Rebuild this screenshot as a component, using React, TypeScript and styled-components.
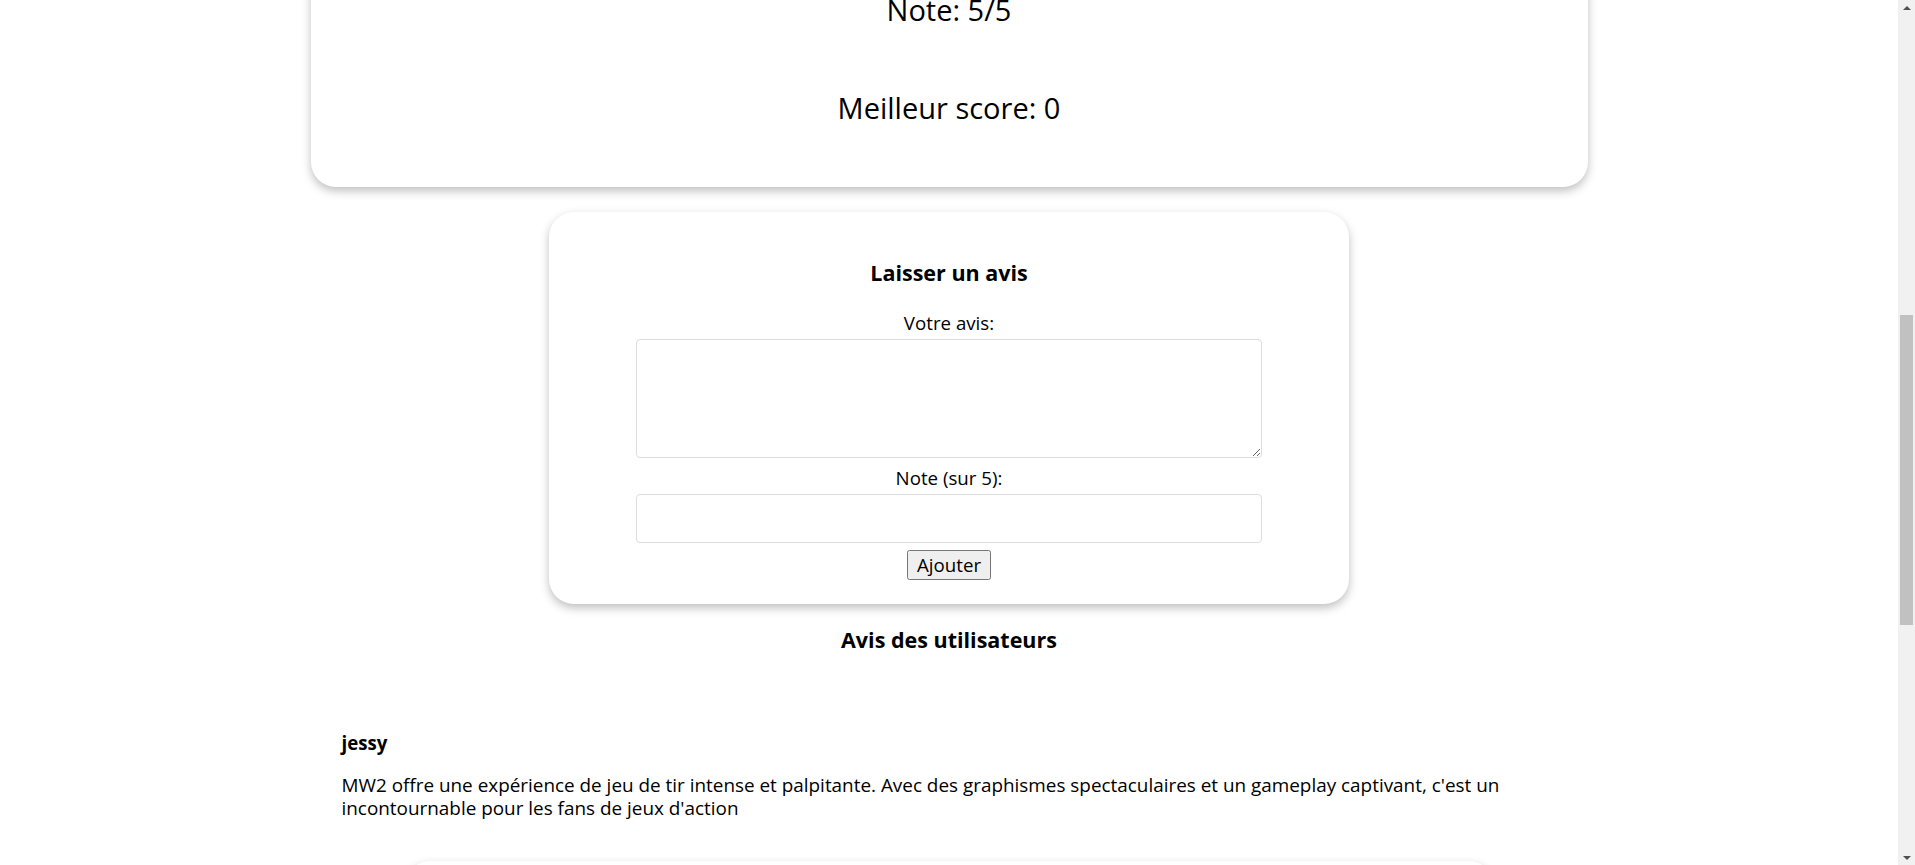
import React, { useLayoutEffect, useRef } from "react";
import styled, { createGlobalStyle } from "styled-components";

const GlobalStyle = createGlobalStyle`
  *, *::before, *::after { box-sizing: border-box; }
  html, body { height: 100%; overflow: hidden; }
  body {
    margin: 0;
    background: #ffffff;
    color: #000000;
    font-family: "Open Sans", "Noto Sans", sans-serif;
    font-size: 18.7px;
  }
`;

/* ---------- window frame with a classic scrollbar ---------- */

const Frame = styled.div`
  display: flex;
  height: 100vh;
  width: 100%;
  overflow: hidden;
`;

const Viewport = styled.div`
  flex: 1;
  height: 100%;
  overflow: hidden;
`;

const ScrollBar = styled.div`
  width: 17px;
  height: 100%;
  flex-shrink: 0;
  display: flex;
  flex-direction: column;
  background: #f1f1f1;
`;

const ScrollButton = styled.div<{ $dir: "up" | "down" }>`
  height: 17px;
  flex-shrink: 0;
  display: flex;
  align-items: center;
  justify-content: center;

  &::before {
    content: "";
    width: 0;
    height: 0;
    border-left: 4px solid transparent;
    border-right: 4px solid transparent;
    ${(p) =>
      p.$dir === "up"
        ? "border-bottom: 4px solid #505050; margin-top: -2px;"
        : "border-top: 4px solid #505050; margin-top: 2px;"}
  }
`;

const Track = styled.div`
  flex: 1;
  display: flex;
  flex-direction: column;
`;

const Thumb = styled.div<{ $offset: number; $size: number }>`
  margin: ${(p) => p.$offset}px 2px 0;
  height: ${(p) => p.$size}px;
  background: #c1c1c1;
`;

/* ---------- page ---------- */

const Page = styled.main`
  display: flex;
  flex-direction: column;
  align-items: center;
  padding: 20px 0 30px;
`;

const Card = styled.section<{ $width: number }>`
  width: ${(p) => p.$width}px;
  background: #ffffff;
  border-radius: 25px;
  box-shadow: 0 4px 10px rgba(0, 0, 0, 0.25);
`;

const GameCard = styled(Card)`
  display: flex;
  flex-direction: column;
  align-items: center;
  text-align: center;
  padding: 31px 31px 59px;
`;

const GameTitle = styled.h1`
  margin: 0 0 24px;
  font-size: 36px;
  line-height: 49px;
  font-weight: 700;
`;

const Cover = styled.div`
  width: 711px;
  height: 400px;
  margin-bottom: 30px;
  border-radius: 12px;
  background: linear-gradient(160deg, #2b3a2e 0%, #151a16 55%, #5b4a2a 100%);
`;

const Description = styled.p`
  margin: 0;
  line-height: 23px;
`;

const Genre = styled.p`
  margin: 22px 0 0;
  line-height: 23px;
`;

const ScoreLine = styled.p`
  margin: 58px 0 0;
  font-size: 29px;
  line-height: 40px;
`;

const ReviewCard = styled(Card)`
  margin-top: 25px;
  padding: 46px 0 24px;
  display: flex;
  flex-direction: column;
  align-items: center;
`;

const SectionTitle = styled.h3<{ $mb?: number; $mt?: number }>`
  margin: ${(p) => p.$mt ?? 0}px 0 ${(p) => p.$mb ?? 0}px;
  font-size: 21.5px;
  line-height: 30px;
  font-weight: 700;
  text-align: center;
`;

const Form = styled.form`
  display: flex;
  flex-direction: column;
  align-items: center;
`;

const Label = styled.label`
  display: block;
  line-height: 24px;
  margin-bottom: 4px;
`;

const TextArea = styled.textarea`
  width: 626px;
  height: 119px;
  margin: 0 0 8px;
  border: 1px solid #dddddd;
  border-radius: 4px;
  font: inherit;
  padding: 8px;
`;

const NumberInput = styled.input`
  width: 626px;
  height: 49px;
  margin: 0 0 7px;
  border: 1px solid #dddddd;
  border-radius: 4px;
  font: inherit;
  padding: 8px;
`;

const SubmitButton = styled.button`
  height: 30px;
  padding: 0 8px;
  font-family: inherit;
  font-size: 18.7px;
  line-height: 26px;
  color: #000000;
`;

const ReviewList = styled.div`
  width: 1277px;
  padding: 76px 31px 0;
  display: flex;
  flex-direction: column;
`;

const ReviewItem = styled.article`
  display: flex;
  flex-direction: column;
  gap: 18.5px;
`;

const ReviewAuthor = styled.h4`
  margin: 0;
  font-size: 18.7px;
  line-height: 24px;
  font-weight: 700;
`;

const ReviewText = styled.p`
  margin: 0;
  font-size: 18.9px;
  line-height: 23px;
`;

const SimilarCard = styled(Card)`
  margin-top: 41px;
  padding: 30px;
  display: flex;
  flex-direction: column;
  gap: 12px;
`;

const GameRow = styled.div`
  height: 150px;
  display: flex;
  align-items: center;
  gap: 24px;
  padding: 12px;
  border-radius: 14px;
  background: #f7f7f7;
`;

const GameThumb = styled.div`
  width: 200px;
  height: 126px;
  border-radius: 10px;
  flex-shrink: 0;
`;

const RowText = styled.div`
  display: flex;
  flex-direction: column;
  gap: 8px;
`;

const RowTitle = styled.span`
  font-weight: 700;
`;

const RowMeta = styled.span`
  color: #444444;
`;

const similarGames = [
  "Call of Duty: Black Ops III",
  "Battlefield 2042",
  "Valorant",
  "Counter-Strike 2",
  "Apex Legends",
  "Rainbow Six Siege",
];

export default function App() {
  const viewportRef = useRef<HTMLDivElement | null>(null);
  const reviewCardRef = useRef<HTMLElement | null>(null);

  useLayoutEffect(() => {
    const vp = viewportRef.current;
    const el = reviewCardRef.current;
    if (!vp || !el) return;
    const offset = el.getBoundingClientRect().top - vp.getBoundingClientRect().top + vp.scrollTop;
    vp.scrollTop = offset - 212;
  }, []);

  return (
    <>
      <GlobalStyle />
      <Frame>
        <Viewport ref={viewportRef}>
          <Page>
            <GameCard $width={1277}>
              <GameTitle>Call of Duty: Modern Warfare II</GameTitle>
              <Cover />
              <Description>
                Call of Duty: Modern Warfare II est un jeu de tir à la première personne développé par Infinity Ward
                et édité par Activision. Le joueur y retrouve la Task Force 141 dans une campagne mondiale, un mode
                multijoueur nerveux et des opérations spéciales en coopération, avec des cartes variées et de
                nombreux modes de jeu.
              </Description>
              <Genre>Genre : FPS — Plateformes : PC, PS5, Xbox Series</Genre>
              <ScoreLine>Note: 5/5</ScoreLine>
              <ScoreLine>Meilleur score: 0</ScoreLine>
            </GameCard>

            <ReviewCard $width={800} ref={reviewCardRef}>
              <SectionTitle $mb={23}>Laisser un avis</SectionTitle>
              <Form onSubmit={(e) => e.preventDefault()}>
                <Label htmlFor="avis">Votre avis:</Label>
                <TextArea id="avis" />
                <Label htmlFor="note">Note (sur 5):</Label>
                <NumberInput id="note" type="number" min={1} max={5} />
                <SubmitButton type="submit">Ajouter</SubmitButton>
              </Form>
            </ReviewCard>

            <SectionTitle $mt={21}>Avis des utilisateurs</SectionTitle>

            <ReviewList>
              <ReviewItem>
                <ReviewAuthor>jessy</ReviewAuthor>
                <ReviewText>
                  MW2 offre une expérience de jeu de tir intense et palpitante. Avec des graphismes spectaculaires et
                  un gameplay captivant, c'est un incontournable pour les fans de jeux d'action
                </ReviewText>
              </ReviewItem>
            </ReviewList>

            <SimilarCard $width={1089}>
              <SectionTitle $mb={8}>Jeux similaires</SectionTitle>
              {similarGames.map((name, i) => (
                <GameRow key={name}>
                  <GameThumb
                    style={{
                      background: `linear-gradient(135deg, hsl(${(i * 29) % 360}, 35%, 35%), hsl(${(i * 29 + 40) % 360}, 30%, 15%))`,
                    }}
                  />
                  <RowText>
                    <RowTitle>{name}</RowTitle>
                    <RowMeta>Note: {5 - (i % 3)}/5</RowMeta>
                  </RowText>
                </GameRow>
              ))}
            </SimilarCard>
          </Page>
        </Viewport>
        <ScrollBar>
          <ScrollButton $dir="up" />
          <Track>
            <Thumb $offset={298} $size={310} />
          </Track>
          <ScrollButton $dir="down" />
        </ScrollBar>
      </Frame>
    </>
  );
}
